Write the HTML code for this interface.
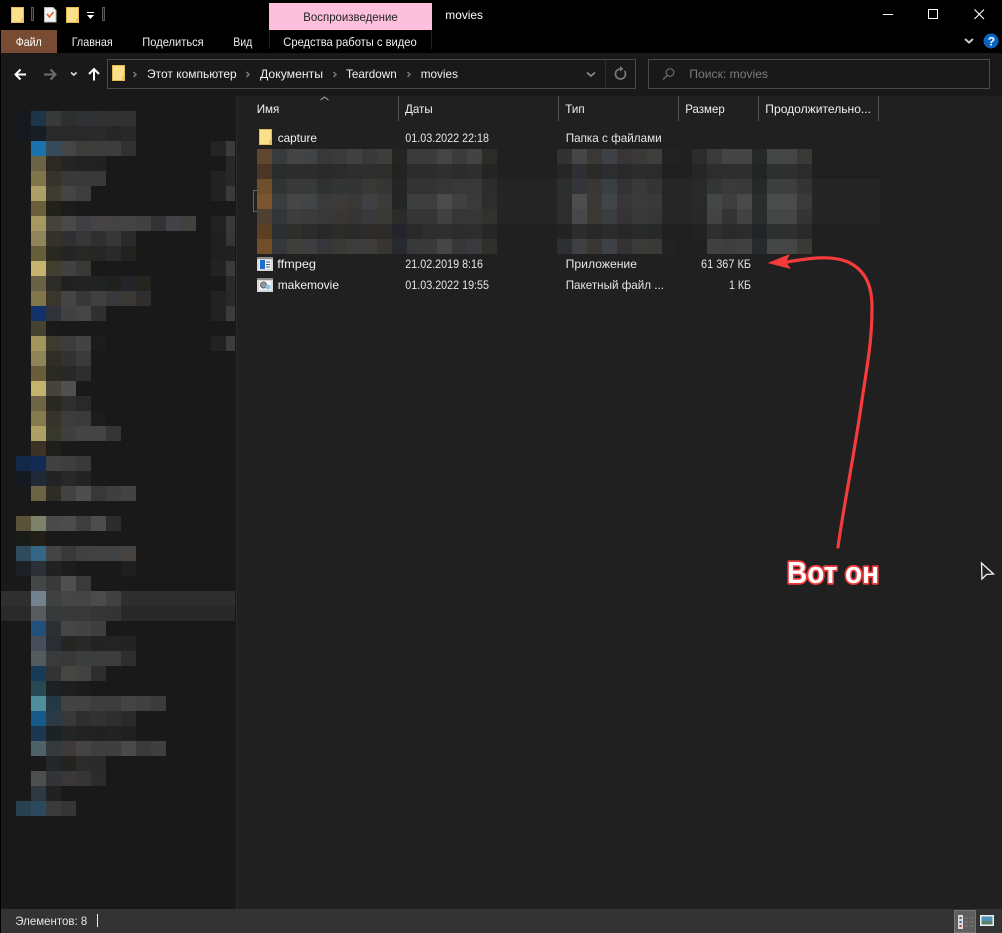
<!DOCTYPE html>
<html lang="ru"><head><meta charset="utf-8"><title>movies</title>
<style>
html,body{margin:0;padding:0;background:#000;width:1002px;height:933px;overflow:hidden}
svg{display:block;position:absolute;left:0;top:0}
text{font-family:"Liberation Sans","Noto Sans CJK SC",sans-serif;font-size:12px;fill:#f0f0f0}
.c rect{width:15px;height:15px}
.dim{fill:#e6e6e6}
</style></head><body>
<svg width="1002" height="933" viewBox="0 0 1002 933" xmlns="http://www.w3.org/2000/svg">
<defs>
<g id="folder"><path d="M.5.5H12.500V15.500H.5Z" fill="#fbe08c" stroke="#e3bb55"/><path d="M10 11h2.500v4.500H10z" fill="#e9c66a"/></g>
</defs>
<!-- bands -->
<rect x="0" y="0" width="1002" height="53" fill="#000"/>
<rect x="1" y="53" width="1001" height="43" fill="#191919"/>
<rect x="1" y="96" width="235" height="813" fill="#191919"/>
<rect x="236" y="96" width="766" height="813" fill="#202020"/>
<rect x="236" y="96" width="1" height="813" fill="#2a2a2a"/>
<rect x="1" y="909" width="1001" height="24" fill="#333"/>
<!-- ribbon -->
<rect x="269" y="3" width="163" height="27" fill="#fcc0dc"/>
<rect x="1" y="30" width="56" height="23" fill="#774c33"/>
<rect x="269" y="30" width="1" height="19" fill="#222"/>
<rect x="431" y="30" width="1" height="19" fill="#222"/>
<use href="#folder" x="11" y="7"/>
<rect x="31.500" y="7.500" width="2" height="13" fill="#1c1c1c" stroke="#5a5a5a"/>
<path d="M44.500 7.500H53L56 10.500V22H44.500Z" fill="#f2f2f2" stroke="#bbb"/>
<path d="M47 14l2.500 3 4-5" fill="none" stroke="#e2572b" stroke-width="1.500"/>
<use href="#folder" x="66" y="7"/>
<path d="M87 12.500h7" stroke="#fff" stroke-width="1"/><path d="M87 15h7l-3.500 4z" fill="#fff"/>
<rect x="102.500" y="7.500" width="2" height="13" fill="#1c1c1c" stroke="#5a5a5a"/>
<text x="15.700" y="46" textLength="26" lengthAdjust="spacingAndGlyphs" fill="#fff" style="fill:#fff">Файл</text>
<text x="71.700" y="46" textLength="41" lengthAdjust="spacingAndGlyphs">Главная</text>
<text x="142.300" y="46" textLength="61.400" lengthAdjust="spacingAndGlyphs">Поделиться</text>
<text x="233.300" y="46" textLength="19" lengthAdjust="spacingAndGlyphs">Вид</text>
<text x="283.300" y="46" textLength="133.400" lengthAdjust="spacingAndGlyphs">Средства работы с видео</text>
<text x="303.300" y="21" textLength="94.400" lengthAdjust="spacingAndGlyphs" style="fill:#222">Воспроизведение</text>
<text x="445.300" y="19" textLength="37.700" lengthAdjust="spacingAndGlyphs" style="fill:#fff">movies</text>
<!-- window controls -->
<path d="M883 14.500h10" stroke="#fff" stroke-width="1"/>
<rect x="928.500" y="9.500" width="9" height="9" fill="none" stroke="#fff"/>
<path d="M974.500 9.500l9.500 9.500M984 9.500l-9.500 9.500" stroke="#fff" stroke-width="1.100"/>
<path d="M965 39l4 3.500 4-3.500" fill="none" stroke="#c8c8c8" stroke-width="2"/>
<circle cx="991" cy="41" r="7.500" fill="#0a64bd"/>
<text x="987.800" y="45.500" style="fill:#fff;font-size:12px;font-weight:bold">?</text>
<!-- nav -->
<path d="M26 74.500H16M20.500 69.500l-5 5 5 5" fill="none" stroke="#fff" stroke-width="2"/>
<path d="M44 74.500h11M50.500 69.500l5 5-5 5" fill="none" stroke="#6d6d6d" stroke-width="2"/>
<path d="M71 72.500l2.800 2.500 2.800-2.500" fill="none" stroke="#ddd" stroke-width="1.600"/>
<path d="M94 80.500V69M89 74l5-5 5 5" fill="none" stroke="#fff" stroke-width="2"/>
<!-- address -->
<rect x="107.500" y="59.500" width="528" height="29" fill="none" stroke="#4a4a4a"/>
<use href="#folder" x="112" y="65"/>
<path d="M133.500 72l2.500 2.500-2.500 2.500M246.500 72l2.500 2.500-2.500 2.500M333.500 72l2.500 2.500-2.500 2.500M407.500 72l2.500 2.500-2.500 2.500" fill="none" stroke="#7a7a7a" stroke-width="1.500"/>
<text x="147" y="78" textLength="89.700" lengthAdjust="spacingAndGlyphs">Этот компьютер</text>
<text x="260" y="78" textLength="63" lengthAdjust="spacingAndGlyphs">Документы</text>
<text x="346" y="78" textLength="50.700" lengthAdjust="spacingAndGlyphs">Teardown</text>
<text x="420.700" y="78" textLength="37.300" lengthAdjust="spacingAndGlyphs">movies</text>
<path d="M587 72.500l4 3.500 4-3.500" fill="none" stroke="#8a8a8a" stroke-width="1.700"/>
<rect x="605" y="60" width="1" height="28" fill="#2c2c2c"/>
<path d="M624.500 71a5 5 0 1 1-2.500-1.800" fill="none" stroke="#7a7a7a" stroke-width="1.700"/><path d="M620 66l3.500 3-3.500 2.500z" fill="#7a7a7a"/>
<!-- search -->
<rect x="648.500" y="59.500" width="341" height="29" fill="none" stroke="#4a4a4a"/>
<circle cx="670" cy="72.500" r="3.800" fill="none" stroke="#6a6a6a" stroke-width="1.200"/>
<path d="M667 75.500l-4 4" stroke="#6a6a6a" stroke-width="1.300"/>
<text x="689.300" y="78" textLength="78.700" lengthAdjust="spacingAndGlyphs" style="fill:#7c7c7c">Поиск: movies</text>
<!-- headers -->
<g fill="#4f4f4f"><rect x="398" y="96" width="1" height="25"/><rect x="558" y="96" width="1" height="25"/><rect x="678" y="96" width="1" height="25"/><rect x="758" y="96" width="1" height="25"/><rect x="878" y="96" width="1" height="25"/></g>
<path d="M320.500 100l4-3 4 3" fill="none" stroke="#aaa" stroke-width="1"/>
<text x="256.700" y="113" textLength="22.600" lengthAdjust="spacingAndGlyphs">Имя</text>
<text x="405" y="113" textLength="27.700" lengthAdjust="spacingAndGlyphs">Даты</text>
<text x="565.300" y="113" textLength="19.400" lengthAdjust="spacingAndGlyphs">Тип</text>
<text x="685.300" y="113" textLength="39.400" lengthAdjust="spacingAndGlyphs">Размер</text>
<text x="765.300" y="113" textLength="105.700" lengthAdjust="spacingAndGlyphs">Продолжительно...</text>
<!-- files -->
<use href="#folder" x="259" y="129"/>
<text x="277.700" y="142" textLength="39.300" lengthAdjust="spacingAndGlyphs">capture</text>
<text x="405.300" y="142" textLength="83.700" lengthAdjust="spacingAndGlyphs" class="dim">01.03.2022 22:18</text>
<text x="565.700" y="142" textLength="96" lengthAdjust="spacingAndGlyphs" class="dim">Папка с файлами</text>
<rect x="257" y="257" width="16" height="14" fill="#d8d8d8"/><rect x="257" y="257" width="16" height="2" fill="#8d8d8d"/><rect x="259" y="260" width="12" height="9" fill="#f5f5f5"/><rect x="260" y="260" width="5" height="9" fill="#1a6fd0"/><path d="M266 262h4M266 264.500h4M266 267h4" stroke="#556" stroke-width="1"/>
<text x="277.300" y="268" textLength="38.700" lengthAdjust="spacingAndGlyphs">ffmpeg</text>
<text x="405.300" y="268" textLength="77.700" lengthAdjust="spacingAndGlyphs" class="dim">21.02.2019 8:16</text>
<text x="565.700" y="268" textLength="71.300" lengthAdjust="spacingAndGlyphs" class="dim">Приложение</text>
<text x="701" y="268" textLength="50" lengthAdjust="spacingAndGlyphs" class="dim">61 367 КБ</text>
<rect x="257" y="278" width="16" height="14" fill="#d8d8d8"/><rect x="257" y="278" width="16" height="2" fill="#8d8d8d"/><rect x="259" y="281" width="12" height="9" fill="#f5f5f5"/><circle cx="263.500" cy="285" r="3" fill="#999" stroke="#666"/><circle cx="268" cy="287" r="2.500" fill="#8cc4e8"/>
<text x="277.700" y="289" textLength="61.300" lengthAdjust="spacingAndGlyphs">makemovie</text>
<text x="405.300" y="289" textLength="83.700" lengthAdjust="spacingAndGlyphs" class="dim">01.03.2022 19:55</text>
<text x="565.700" y="289" textLength="98.300" lengthAdjust="spacingAndGlyphs" class="dim">Пакетный файл ...</text>
<text x="729" y="289" textLength="22" lengthAdjust="spacingAndGlyphs" class="dim">1 КБ</text>
<!-- wide dim blocks -->
<rect x="497" y="179" width="60" height="45" fill="#232423"/>
<rect x="662" y="179" width="30" height="45" fill="#252625"/>
<rect x="812" y="179" width="68" height="45" fill="#242524"/>
<rect x="1" y="591" width="30" height="15" fill="#2f2f2f"/><rect x="121" y="591" width="114" height="15" fill="#2e2e2e"/>
<rect x="1" y="606" width="30" height="15" fill="#2a2a2a"/><rect x="121" y="606" width="114" height="15" fill="#282828"/>
<rect x="253.500" y="190.500" width="6" height="21" fill="none" stroke="#666"/>
<!-- main pixel blocks -->
<g class="c">
<g transform="translate(0,149)"><rect x="257" fill="#5f4630"/><rect x="272" fill="#393a3c"/><rect x="287" fill="#444442"/><rect x="302" fill="#424345"/><rect x="317" fill="#37383a"/><rect x="332" fill="#3b3b3b"/><rect x="347" fill="#41423f"/><rect x="362" fill="#383938"/><rect x="377" fill="#3d3d3a"/><rect x="392" fill="#232524"/><rect x="407" fill="#3b3b3b"/><rect x="422" fill="#3b3b3a"/><rect x="437" fill="#444544"/><rect x="452" fill="#3b3b3b"/><rect x="467" fill="#424443"/><rect x="482" fill="#2c2b28"/><rect x="557" fill="#323232"/><rect x="572" fill="#464648"/><rect x="587" fill="#3a3834"/><rect x="602" fill="#3e4145"/><rect x="617" fill="#373535"/><rect x="632" fill="#3a3937"/><rect x="647" fill="#3e3e3c"/><rect x="662" fill="#222"/><rect x="677" fill="#212121"/><rect x="692" fill="#2c2c2c"/><rect x="707" fill="#3a3a3a"/><rect x="722" fill="#444"/><rect x="737" fill="#444"/><rect x="752" fill="#262927"/><rect x="767" fill="#444645"/><rect x="782" fill="#444645"/><rect x="797" fill="#3a3936"/></g>
<g transform="translate(0,164)"><rect x="257" fill="#4a3526"/><rect x="272" fill="#2a2b2b"/><rect x="287" fill="#2b2c2b"/><rect x="302" fill="#2b2c2b"/><rect x="317" fill="#2a2a2a"/><rect x="332" fill="#2b2b2b"/><rect x="347" fill="#2e2f2c"/><rect x="362" fill="#2d2e2d"/><rect x="377" fill="#2d2d2a"/><rect x="392" fill="#222"/><rect x="407" fill="#2c2c2c"/><rect x="422" fill="#2c2c2c"/><rect x="437" fill="#2e302f"/><rect x="452" fill="#2c2c2c"/><rect x="467" fill="#2d2e2e"/><rect x="482" fill="#252423"/><rect x="557" fill="#262626"/><rect x="572" fill="#2e3033"/><rect x="587" fill="#2c2a27"/><rect x="602" fill="#2c2d2e"/><rect x="617" fill="#2a2929"/><rect x="632" fill="#2c2c2a"/><rect x="647" fill="#2a2b2b"/><rect x="692" fill="#262626"/><rect x="707" fill="#2c2e2e"/><rect x="722" fill="#2e2e2e"/><rect x="737" fill="#2e2e2e"/><rect x="752" fill="#232524"/><rect x="767" fill="#2e2f2f"/><rect x="782" fill="#2e2f2f"/><rect x="797" fill="#2b2b2b"/></g>
<g transform="translate(0,179)"><rect x="257" fill="#6f4e2c"/><rect x="272" fill="#323333"/><rect x="287" fill="#383938"/><rect x="302" fill="#383939"/><rect x="317" fill="#303231"/><rect x="332" fill="#333535"/><rect x="347" fill="#333534"/><rect x="362" fill="#3a3835"/><rect x="377" fill="#343534"/><rect x="392" fill="#242625"/><rect x="407" fill="#333"/><rect x="422" fill="#333"/><rect x="437" fill="#363734"/><rect x="452" fill="#383838"/><rect x="467" fill="#36383a"/><rect x="482" fill="#2c2c2a"/><rect x="557" fill="#2c2f2e"/><rect x="572" fill="#343538"/><rect x="587" fill="#393733"/><rect x="602" fill="#3a3f42"/><rect x="617" fill="#353233"/><rect x="632" fill="#393a37"/><rect x="647" fill="#333433"/><rect x="692" fill="#282a29"/><rect x="707" fill="#343635"/><rect x="722" fill="#3a3a3a"/><rect x="737" fill="#383a39"/><rect x="752" fill="#262927"/><rect x="767" fill="#3d3f3f"/><rect x="782" fill="#3d3f3f"/><rect x="797" fill="#343533"/></g>
<g transform="translate(0,194)"><rect x="257" fill="#7a5530"/><rect x="272" fill="#3b3c3e"/><rect x="287" fill="#464645"/><rect x="302" fill="#424446"/><rect x="317" fill="#393a3c"/><rect x="332" fill="#3d3b3a"/><rect x="347" fill="#3a3837"/><rect x="362" fill="#3e4043"/><rect x="377" fill="#3c3b39"/><rect x="392" fill="#242625"/><rect x="407" fill="#3d3e3e"/><rect x="422" fill="#3e3e3e"/><rect x="437" fill="#4a4c4b"/><rect x="452" fill="#414141"/><rect x="467" fill="#383a3c"/><rect x="482" fill="#2e2d2c"/><rect x="557" fill="#2c2e2e"/><rect x="572" fill="#4d4d50"/><rect x="587" fill="#3b3935"/><rect x="602" fill="#424548"/><rect x="617" fill="#383637"/><rect x="632" fill="#3a3b38"/><rect x="647" fill="#383a3a"/><rect x="692" fill="#282a29"/><rect x="707" fill="#454746"/><rect x="722" fill="#3e3e3e"/><rect x="737" fill="#4a4a4a"/><rect x="752" fill="#2a2d2b"/><rect x="767" fill="#4a4c4b"/><rect x="782" fill="#4a4c4b"/><rect x="797" fill="#3a3a38"/></g>
<g transform="translate(0,209)"><rect x="257" fill="#4e4032"/><rect x="272" fill="#343536"/><rect x="287" fill="#3c3d3c"/><rect x="302" fill="#3b3b3c"/><rect x="317" fill="#383839"/><rect x="332" fill="#383735"/><rect x="347" fill="#363534"/><rect x="362" fill="#38393b"/><rect x="377" fill="#3a3a34"/><rect x="392" fill="#2a2c2a"/><rect x="407" fill="#353535"/><rect x="422" fill="#353535"/><rect x="437" fill="#3f4140"/><rect x="452" fill="#363636"/><rect x="467" fill="#363636"/><rect x="482" fill="#32312e"/><rect x="557" fill="#2c2e2e"/><rect x="572" fill="#48484b"/><rect x="587" fill="#3a3833"/><rect x="602" fill="#3b3e41"/><rect x="617" fill="#353334"/><rect x="632" fill="#393a37"/><rect x="647" fill="#353636"/><rect x="692" fill="#272827"/><rect x="707" fill="#424443"/><rect x="722" fill="#343434"/><rect x="737" fill="#424242"/><rect x="752" fill="#2a2d2b"/><rect x="767" fill="#444645"/><rect x="782" fill="#444645"/><rect x="797" fill="#343432"/></g>
<g transform="translate(0,224)"><rect x="257" fill="#5c3f22"/><rect x="272" fill="#2c2e30"/><rect x="287" fill="#302e2c"/><rect x="302" fill="#2a2c2a"/><rect x="317" fill="#262726"/><rect x="332" fill="#2c2b28"/><rect x="347" fill="#2a2a2a"/><rect x="362" fill="#2c2b29"/><rect x="377" fill="#2c2b29"/><rect x="392" fill="#23252a"/><rect x="407" fill="#292929"/><rect x="422" fill="#2e2e2e"/><rect x="437" fill="#2e302f"/><rect x="452" fill="#2c2c2c"/><rect x="467" fill="#2c2d2e"/><rect x="482" fill="#272625"/><rect x="557" fill="#232323"/><rect x="572" fill="#2b2c2e"/><rect x="587" fill="#2a2827"/><rect x="602" fill="#2a2b2c"/><rect x="617" fill="#282727"/><rect x="632" fill="#292a29"/><rect x="647" fill="#262929"/><rect x="692" fill="#222"/><rect x="707" fill="#2e2f2e"/><rect x="722" fill="#2a2a2a"/><rect x="737" fill="#2c2c2c"/><rect x="752" fill="#222528"/><rect x="767" fill="#2e2f2f"/><rect x="782" fill="#2e2f2f"/><rect x="797" fill="#2a2a2a"/></g>
<g transform="translate(0,239)"><rect x="257" fill="#724e28"/><rect x="272" fill="#35373a"/><rect x="287" fill="#403f3c"/><rect x="302" fill="#3c3e3f"/><rect x="317" fill="#36363a"/><rect x="332" fill="#3a3936"/><rect x="347" fill="#3c3d3c"/><rect x="362" fill="#3e3d3a"/><rect x="377" fill="#363531"/><rect x="392" fill="#262a2e"/><rect x="407" fill="#383838"/><rect x="422" fill="#393938"/><rect x="437" fill="#444645"/><rect x="452" fill="#363636"/><rect x="467" fill="#383a3d"/><rect x="482" fill="#302f2c"/><rect x="557" fill="#2d2f34"/><rect x="572" fill="#3e4044"/><rect x="587" fill="#3a3733"/><rect x="602" fill="#3e4247"/><rect x="617" fill="#353233"/><rect x="632" fill="#3a3a38"/><rect x="647" fill="#3a3936"/><rect x="662" fill="#222"/><rect x="707" fill="#404040"/><rect x="722" fill="#3e3e3e"/><rect x="737" fill="#414141"/><rect x="752" fill="#272a2d"/><rect x="767" fill="#444645"/><rect x="782" fill="#444645"/><rect x="797" fill="#3a3936"/></g>
<!-- sidebar pixel blocks -->
<g transform="translate(0,111)"><rect x="16" fill="#15191d"/><rect x="31" fill="#1c3547"/><rect x="46" fill="#37393b"/><rect x="61" fill="#2e2f2f"/><rect x="76" fill="#2e3235"/><rect x="91" fill="#333131"/><rect x="106" fill="#303132"/><rect x="121" fill="#333230"/></g>
<g transform="translate(0,126)"><rect x="16" fill="#15191d"/><rect x="31" fill="#161d25"/><rect x="46" fill="#2a2929"/><rect x="61" fill="#292929"/><rect x="76" fill="#292929"/><rect x="91" fill="#2c2929"/><rect x="106" fill="#242726"/><rect x="121" fill="#292826"/></g>
<g transform="translate(0,141)"><rect x="31" fill="#1a72ac"/><rect x="46" fill="#354a5a"/><rect x="61" fill="#444546"/><rect x="76" fill="#3d3c3a"/><rect x="91" fill="#3c3c3b"/><rect x="106" fill="#3c3e3d"/><rect x="121" fill="#32312f"/><rect x="211" fill="#232524"/><rect x="226" fill="#3a3b3c" style="width:9px"/></g>
<g transform="translate(0,156)"><rect x="31" fill="#6c6347"/><rect x="46" fill="#2b2922"/><rect x="61" fill="#242423"/><rect x="76" fill="#222"/><rect x="91" fill="#212120"/><rect x="226" fill="#26282a" style="width:9px"/></g>
<g transform="translate(0,171)"><rect x="31" fill="#7f7549"/><rect x="46" fill="#37332a"/><rect x="61" fill="#393939"/><rect x="76" fill="#383838"/><rect x="91" fill="#3a3937"/><rect x="211" fill="#212423"/><rect x="226" fill="#26282a" style="width:9px"/></g>
<g transform="translate(0,186)"><rect x="31" fill="#ada064"/><rect x="46" fill="#3e3a30"/><rect x="61" fill="#444"/><rect x="76" fill="#3e3e3e"/><rect x="211" fill="#222423"/><rect x="226" fill="#3a3a3c" style="width:9px"/></g>
<g transform="translate(0,201)"><rect x="31" fill="#69603b"/><rect x="46" fill="#23221a"/><rect x="61" fill="#1c1c1b"/></g>
<g transform="translate(0,216)"><rect x="31" fill="#a59960"/><rect x="46" fill="#45423a"/><rect x="61" fill="#4a4848"/><rect x="76" fill="#3e4043"/><rect x="91" fill="#454343"/><rect x="106" fill="#444243"/><rect x="121" fill="#444"/><rect x="136" fill="#424140"/><rect x="151" fill="#333"/><rect x="166" fill="#424346"/><rect x="181" fill="#424140"/><rect x="211" fill="#222423"/><rect x="226" fill="#38393b" style="width:9px"/></g>
<g transform="translate(0,231)"><rect x="31" fill="#90845a"/><rect x="46" fill="#35322b"/><rect x="61" fill="#2e3033"/><rect x="76" fill="#373735"/><rect x="91" fill="#302e2f"/><rect x="106" fill="#383738"/><rect x="121" fill="#2b2a28"/><rect x="211" fill="#1f2120"/><rect x="226" fill="#353638" style="width:9px"/></g>
<g transform="translate(0,246)"><rect x="31" fill="#665d3a"/><rect x="46" fill="#2a2920"/><rect x="61" fill="#252525"/><rect x="76" fill="#272723"/><rect x="91" fill="#272626"/><rect x="106" fill="#2b2a2a"/><rect x="121" fill="#22221f"/><rect x="211" fill="#1e2120"/><rect x="226" fill="#1e2120" style="width:9px"/></g>
<g transform="translate(0,261)"><rect x="31" fill="#c5b36f"/><rect x="46" fill="#423f30"/><rect x="61" fill="#414141"/><rect x="76" fill="#393835"/><rect x="211" fill="#222423"/><rect x="226" fill="#3b3b3c" style="width:9px"/></g>
<g transform="translate(0,276)"><rect x="31" fill="#6a6246"/><rect x="46" fill="#2e2c26"/><rect x="61" fill="#212121"/><rect x="76" fill="#222"/><rect x="91" fill="#1f2322"/><rect x="106" fill="#20201d"/><rect x="121" fill="#23252a"/><rect x="136" fill="#25241f"/><rect x="226" fill="#282a2c" style="width:9px"/></g>
<g transform="translate(0,291)"><rect x="31" fill="#80764a"/><rect x="46" fill="#3a362b"/><rect x="61" fill="#444446"/><rect x="76" fill="#373735"/><rect x="91" fill="#423f40"/><rect x="106" fill="#36383b"/><rect x="121" fill="#3a3835"/><rect x="136" fill="#2f2e2d"/><rect x="211" fill="#202322"/><rect x="226" fill="#27292b" style="width:9px"/></g>
<g transform="translate(0,306)"><rect x="31" fill="#13316a"/><rect x="46" fill="#30333a"/><rect x="61" fill="#434040"/><rect x="76" fill="#454545"/><rect x="91" fill="#313030"/><rect x="211" fill="#212322"/><rect x="226" fill="#3c3c3e" style="width:9px"/></g>
<g transform="translate(0,321)"><rect x="31" fill="#45432f"/><rect x="46" fill="#1c1a19"/></g>
<g transform="translate(0,336)"><rect x="31" fill="#a3965c"/><rect x="46" fill="#3e3a2e"/><rect x="61" fill="#3c3c3c"/><rect x="76" fill="#434343"/><rect x="91" fill="#1e1c1a"/><rect x="211" fill="#202322"/><rect x="226" fill="#3a3c3e" style="width:9px"/></g>
<g transform="translate(0,351)"><rect x="31" fill="#8f8458"/><rect x="46" fill="#2f2d24"/><rect x="61" fill="#323232"/><rect x="76" fill="#3a3a3a"/></g>
<g transform="translate(0,366)"><rect x="31" fill="#685f3a"/><rect x="46" fill="#2b2a20"/><rect x="61" fill="#282828"/><rect x="76" fill="#2e2e2e"/></g>
<g transform="translate(0,381)"><rect x="31" fill="#c4b36e"/><rect x="46" fill="#45433a"/><rect x="61" fill="#505050"/></g>
<g transform="translate(0,396)"><rect x="31" fill="#6d6445"/><rect x="46" fill="#29291f"/><rect x="61" fill="#2f2f2f"/><rect x="76" fill="#292929"/></g>
<g transform="translate(0,411)"><rect x="31" fill="#847a4c"/><rect x="46" fill="#37332a"/><rect x="61" fill="#3c3c3c"/><rect x="76" fill="#3a3a3a"/><rect x="91" fill="#1e1c1a"/></g>
<g transform="translate(0,426)"><rect x="31" fill="#ada064"/><rect x="46" fill="#38372c"/><rect x="61" fill="#403f3f"/><rect x="76" fill="#444"/><rect x="91" fill="#444"/><rect x="106" fill="#363533"/></g>
<g transform="translate(0,441)"><rect x="31" fill="#3d3324"/><rect x="46" fill="#1f1e18"/></g>
<g transform="translate(0,456)"><rect x="16" fill="#142848"/><rect x="31" fill="#132a52"/><rect x="46" fill="#414141"/><rect x="61" fill="#3e3e3e"/><rect x="76" fill="#393939"/></g>
<g transform="translate(0,471)"><rect x="16" fill="#151a21"/><rect x="31" fill="#1f2a36"/><rect x="46" fill="#232323"/><rect x="61" fill="#282828"/><rect x="76" fill="#232323"/></g>
<g transform="translate(0,486)"><rect x="31" fill="#6a6344"/><rect x="46" fill="#2e2d25"/><rect x="61" fill="#434144"/><rect x="76" fill="#4e4e4e"/><rect x="91" fill="#3a3738"/><rect x="106" fill="#403f3f"/><rect x="121" fill="#444344"/></g>
<g transform="translate(0,516)"><rect x="16" fill="#5b5339"/><rect x="31" fill="#7c8368"/><rect x="46" fill="#4a4a4d"/><rect x="61" fill="#4c4c4c"/><rect x="76" fill="#3e3f3d"/><rect x="91" fill="#4d4d4d"/><rect x="106" fill="#2c2c2c"/></g>
<g transform="translate(0,531)"><rect x="16" fill="#1a1c17"/><rect x="31" fill="#211f18"/></g>
<g transform="translate(0,546)"><rect x="16" fill="#2f4a5a"/><rect x="31" fill="#356686"/><rect x="46" fill="#434446"/><rect x="61" fill="#393938"/><rect x="76" fill="#414141"/><rect x="91" fill="#424242"/><rect x="106" fill="#404244"/><rect x="121" fill="#474341"/></g>
<g transform="translate(0,561)"><rect x="16" fill="#1d2125"/><rect x="31" fill="#2b3039"/><rect x="46" fill="#212121"/><rect x="61" fill="#1d1d1d"/><rect x="121" fill="#1f1f1f"/></g>
<g transform="translate(0,576)"><rect x="31" fill="#434748"/><rect x="46" fill="#393939"/><rect x="61" fill="#4e4f50"/><rect x="76" fill="#3b3a38"/></g>
<g transform="translate(0,591)"><rect x="31" fill="#748290"/><rect x="46" fill="#3e4042"/><rect x="61" fill="#454545"/><rect x="76" fill="#444"/><rect x="91" fill="#4a4c4c"/><rect x="106" fill="#434040"/></g>
<g transform="translate(0,606)"><rect x="31" fill="#575b60"/><rect x="46" fill="#363939"/><rect x="61" fill="#393937"/><rect x="76" fill="#393939"/><rect x="91" fill="#353535"/><rect x="106" fill="#343434"/></g>
<g transform="translate(0,621)"><rect x="31" fill="#22507a"/><rect x="46" fill="#2c3035"/><rect x="61" fill="#464646"/><rect x="76" fill="#424345"/><rect x="91" fill="#403e3c"/></g>
<g transform="translate(0,636)"><rect x="31" fill="#464e5c"/><rect x="46" fill="#2a2d33"/><rect x="61" fill="#272522"/><rect x="76" fill="#282828"/><rect x="91" fill="#232323"/><rect x="106" fill="#242424"/><rect x="121" fill="#232323"/></g>
<g transform="translate(0,651)"><rect x="31" fill="#525b5d"/><rect x="46" fill="#393a3c"/><rect x="61" fill="#383936"/><rect x="76" fill="#3b3e3e"/><rect x="91" fill="#3c3c3c"/><rect x="106" fill="#3e3c3c"/><rect x="121" fill="#2e2e2e"/></g>
<g transform="translate(0,666)"><rect x="31" fill="#183c58"/><rect x="46" fill="#333"/><rect x="61" fill="#464542"/><rect x="76" fill="#424242"/><rect x="91" fill="#2e2d2d"/></g>
<g transform="translate(0,681)"><rect x="31" fill="#274953"/><rect x="46" fill="#1c2224"/><rect x="61" fill="#1e1e1e"/><rect x="76" fill="#1b1b1b"/></g>
<g transform="translate(0,696)"><rect x="31" fill="#4f8f9b"/><rect x="46" fill="#233a45"/><rect x="61" fill="#444341"/><rect x="76" fill="#424242"/><rect x="91" fill="#3e3d3d"/><rect x="106" fill="#3c3c3a"/><rect x="121" fill="#444"/><rect x="136" fill="#404040"/><rect x="151" fill="#3b3b3b"/></g>
<g transform="translate(0,711)"><rect x="31" fill="#165a8c"/><rect x="46" fill="#2b3a45"/><rect x="61" fill="#36383a"/><rect x="76" fill="#302e2c"/><rect x="91" fill="#333232"/><rect x="106" fill="#2e2e2e"/><rect x="121" fill="#2a2a28"/></g>
<g transform="translate(0,726)"><rect x="31" fill="#1b3850"/><rect x="46" fill="#1c2327"/><rect x="61" fill="#242625"/><rect x="76" fill="#222"/><rect x="91" fill="#212121"/><rect x="106" fill="#212423"/><rect x="121" fill="#202020"/></g>
<g transform="translate(0,741)"><rect x="31" fill="#4e6268"/><rect x="46" fill="#34393d"/><rect x="61" fill="#3f3a39"/><rect x="76" fill="#444"/><rect x="91" fill="#3f3f3f"/><rect x="106" fill="#3f3f3f"/><rect x="121" fill="#4a4a4a"/><rect x="136" fill="#3a3a3a"/><rect x="151" fill="#3e403f"/></g>
<g transform="translate(0,756)"><rect x="46" fill="#23262a"/><rect x="61" fill="#252320"/><rect x="76" fill="#2b2b2b"/><rect x="91" fill="#2a2a2a"/></g>
<g transform="translate(0,771)"><rect x="31" fill="#4e4f4f"/><rect x="46" fill="#323437"/><rect x="61" fill="#393737"/><rect x="76" fill="#363534"/><rect x="91" fill="#2c2b2b"/></g>
<g transform="translate(0,786)"><rect x="31" fill="#2e3840"/><rect x="46" fill="#212121"/></g>
<g transform="translate(0,801)"><rect x="16" fill="#28404f"/><rect x="31" fill="#2a495f"/><rect x="46" fill="#3a3a3a"/><rect x="61" fill="#353535"/></g>
</g>
<!-- status bar -->
<text x="15.300" y="925" textLength="72" lengthAdjust="spacingAndGlyphs" class="dim">Элементов: 8</text>
<rect x="97" y="914" width="1" height="13" fill="#eee"/>
<rect x="954.500" y="910.500" width="21" height="22" fill="#5e5e5e" stroke="#757575"/>
<rect x="958" y="915" width="5" height="14" fill="#ddd"/>
<rect x="959.500" y="917" width="2" height="2" fill="#555"/><rect x="959.500" y="921" width="2" height="2" fill="#3366bb"/><rect x="959.500" y="925" width="2" height="2" fill="#b03030"/>
<path d="M964 918h4M969.500 918h4M964 922h4M969.500 922h4M964 926h4M969.500 926h4" stroke="#7b7b7b" stroke-width="1"/>
<rect x="980" y="915" width="14" height="11" fill="#eee"/>
<rect x="981.500" y="916.500" width="11" height="8" fill="#4f93b8"/><rect x="981.500" y="921" width="11" height="3.500" fill="#5b7f6d"/>
<!-- annotation arrow -->
<path d="M838 547C843 510 855 450 862 400C868 360 872 340 872 307C872 285 865 270 848 262C832 255 810 258 787 262" fill="none" stroke="#f53b3b" stroke-width="3.200" stroke-linecap="round"/>
<path d="M767.500 263L790 254L786 262L791 269Z" fill="#f53b3b"/>
<text x="787" y="583" textLength="92" lengthAdjust="spacingAndGlyphs" stroke="#f03a3a" stroke-width="3.500" stroke-linejoin="round" paint-order="stroke" style="fill:#fff;font-size:31px;font-weight:bold">Вот он</text>
<!-- cursor -->
<path d="M981.500 563L993.500 574L986.500 574.500L982 579Z" fill="#222" stroke="#f4f4f4" stroke-width="1.300"/>
</svg>
</body></html>
